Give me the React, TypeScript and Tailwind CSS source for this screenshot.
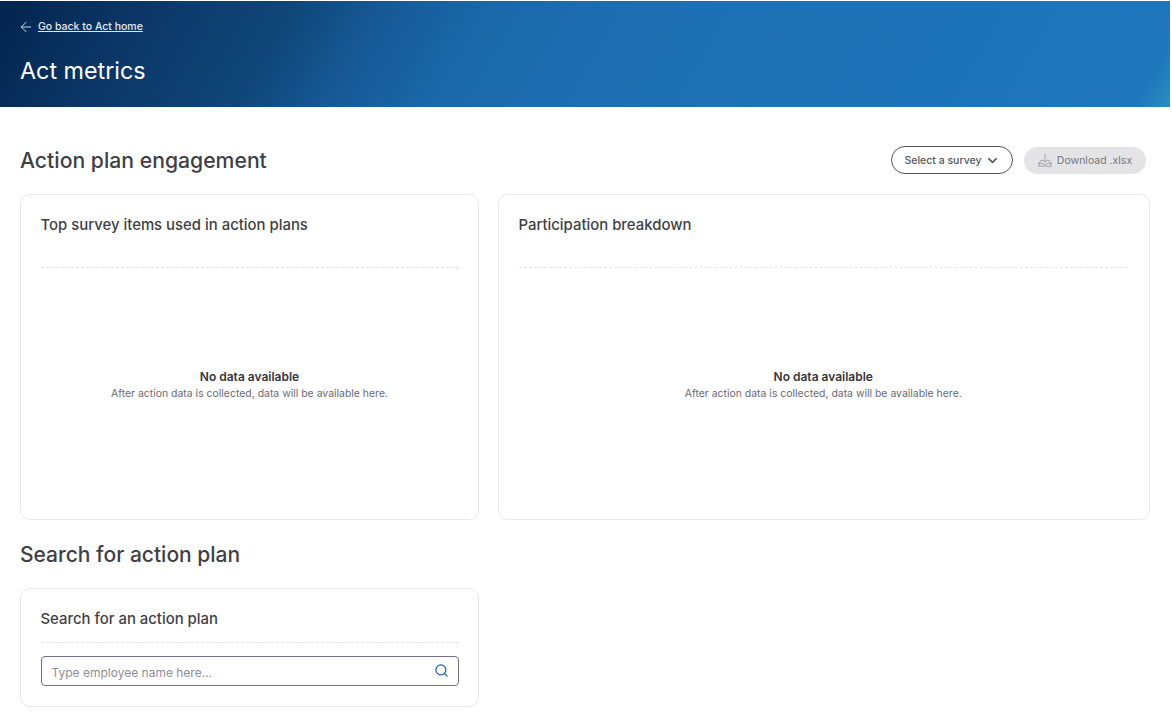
import { ArrowLeft, ChevronDown, Search } from "lucide-react";

function DownloadIcon() {
  return (
    <svg width="14" height="14" viewBox="0 0 14 14" fill="none" stroke="#85858d" strokeWidth="0.7">
      <path d="M7 .8v8.4M4.7 7 7 9.2 9.3 7" />
      <path d="M4.6 7.6H2.8L.8 10.4v2.8h12.4v-2.8l-2-2.8H9.4" />
      <path d="M.8 10.4h3.6c.3.9 1.2 1.2 2.6 1.2s2.3-.3 2.6-1.2h3.6" />
    </svg>
  );
}

function EmptyCard({ title, className }: { title: string; className: string }) {
  return (
    <section className={`h-[326px] rounded-[10px] border border-[#e8e8ea] bg-white pl-[19.5px] pt-[20px] flex flex-col ${className}`}>
      <h3 className="text-[14.9px] leading-5 font-medium text-[#3f3f46]">{title}</h3>
      <div className="mt-[32px] border-t border-dashed border-[#e4e4e7]" />
      <div className="flex flex-col items-center pt-[101px]">
        <p className="text-[12px] leading-4 font-semibold text-[#36363c]">No data available</p>
        <p className="mt-[1px] text-[10.45px] leading-4 text-[#6b6b73]">After action data is collected, data will be available here.</p>
      </div>
    </section>
  );
}

export default function App() {
  return (
    <div className="min-h-screen w-[1172px] overflow-hidden bg-white pt-px pr-[2px] font-['Inter',sans-serif]">
      {/* Banner */}
      <header className="h-[106px] bg-[linear-gradient(120deg,#03244d_0%,#0b3768_12%,#0f4678_24%,#175a98_32%,#1a68a8_40%,#1d6fb2_52%,#1e76bc_97%,#2a8fc0_100%)] pl-[18px] pt-4">
        <a className="flex items-center gap-[4px] text-[#e8edf3]">
          <ArrowLeft size={16} strokeWidth={1.3} />
          <span className="pt-px text-[10.5px] leading-[18px] font-medium underline text-[#e4e9f0]">Go back to Act home</span>
        </a>
        <h1 className="mt-[19px] pl-[2px] text-[23.3px] leading-8 font-normal text-white">Act metrics</h1>
      </header>

      <main className="pl-5 pr-[20px]">
        <div className="mt-[39px] flex items-center justify-between h-[28px]">
          <h2 className="pt-px text-[21.2px] font-medium text-[#3f3f46]">Action plan engagement</h2>
          <div className="flex items-center gap-[11px] pr-[4px]">
            <button className="flex h-[28px] w-[122px] items-center justify-center gap-[3px] rounded-full border border-[#55555c] bg-white text-[10.5px] font-medium text-[#55555c]">
              <span className="pt-px">Select a survey</span>
              <ChevronDown size={15} strokeWidth={2.4} />
            </button>
            <button className="flex h-[27px] w-[122px] items-center justify-center gap-[5px] rounded-full bg-[#e4e4e7] text-[10.5px] text-[#77777f] font-normal">
              <DownloadIcon />
              <span className="pt-px">Download .xlsx</span>
            </button>
          </div>
        </div>

        <div className="mt-[20px] flex gap-[19px]">
          <EmptyCard title="Top survey items used in action plans" className="w-[459px] pr-[19.5px]" />
          <EmptyCard title="Participation breakdown" className="w-[652px] pr-[21px]" />
        </div>

        <h2 className="mt-[20px] text-[21px] leading-[30px] font-medium text-[#3f3f46]">Search for action plan</h2>

        <section className="mt-[18px] w-[459px] rounded-[10px] border border-[#e8e8ea] px-[19.5px] pt-[20px] pb-[20px]">
          <h3 className="text-[14.9px] leading-5 font-medium text-[#3f3f46]">Search for an action plan</h3>
          <div className="mt-[13px] border-t border-dashed border-[#e4e4e7]" />
          <div className="mt-[13px] flex h-[30px] items-center justify-between rounded-[4px] border border-[#71718a] pl-[10px] pr-[9px]">
            <span className="pt-[3px] text-[12px] text-[#8e8e95]">Type employee name here...</span>
            <Search size={15} strokeWidth={2} className="mb-[2px] text-[#1c5fb0]" />
          </div>
        </section>
      </main>
    </div>
  );
}
